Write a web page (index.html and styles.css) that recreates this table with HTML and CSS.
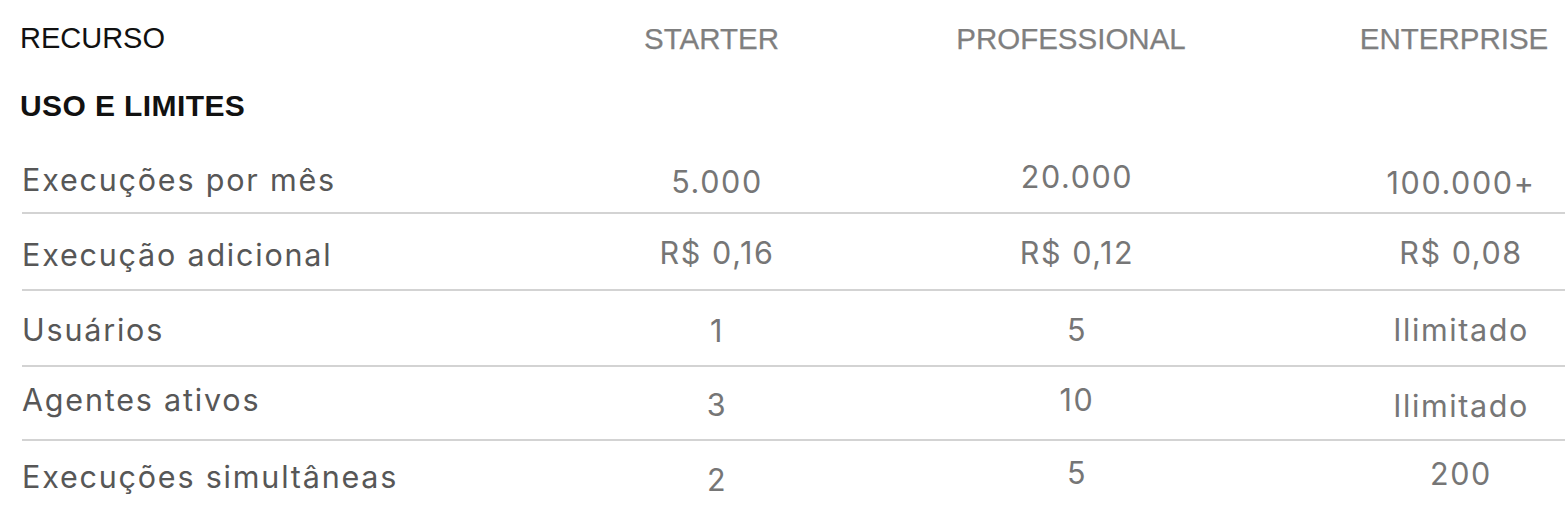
FILE: index.html
```html
<!DOCTYPE html>
<html lang="pt-BR">
<head>
<meta charset="utf-8">
<title>Comparação de recursos</title>
<link rel="stylesheet" href="styles.css">
</head>
<body>
<div class="table">
  <div class="head">
    <div class="h-label">RECURSO</div>
    <div class="h-tier h-starter">STARTER</div>
    <div class="h-tier h-pro">PROFESSIONAL</div>
    <div class="h-tier h-ent">ENTERPRISE</div>
  </div>
  <div class="section">USO E LIMITES</div>
  <div class="row r1">
    <div class="label">Execuções por mês</div>
    <div class="val d2">5.000</div>
    <div class="val u3">20.000</div>
    <div class="val ent d3">100.000+</div>
  </div>
  <div class="row r2">
    <div class="label">Execução adicional</div>
    <div class="val u2">R$ 0,16</div>
    <div class="val u2">R$ 0,12</div>
    <div class="val ent u2">R$ 0,08</div>
  </div>
  <div class="row r3">
    <div class="label">Usuários</div>
    <div class="val d1">1</div>
    <div class="val">5</div>
    <div class="val ent">Ilimitado</div>
  </div>
  <div class="row r4">
    <div class="label">Agentes ativos</div>
    <div class="val d5">3</div>
    <div class="val">10</div>
    <div class="val ent d6">Ilimitado</div>
  </div>
  <div class="row r5 last">
    <div class="label">Execuções simultâneas</div>
    <div class="val d3">2</div>
    <div class="val u4">5</div>
    <div class="val ent u3">200</div>
  </div>
</div>
</body>
</html>
```

FILE: styles.css
```css
html, body {
  margin: 0;
  padding: 0;
  background: #ffffff;
}

.table {
  padding: 24px 0 0 20px;
}

.head {
  display: grid;
  grid-template-columns: 515px 360px 360px 1fr;
  font-family: "Liberation Sans", Arial, sans-serif;
  font-size: 29.5px;
  line-height: 29px;
}

.h-label {
  color: #111111;
  font-size: 29px;
}

.h-tier {
  color: #7f7f7f;
  text-align: center;
  -webkit-text-stroke: 0.25px #7f7f7f;
}

.h-starter {
  margin-right: 7px;
}

.h-pro {
  margin-right: 8px;
}

.h-ent {
  padding-left: 100px;
  margin-right: 12px;
}

.section {
  margin-top: 38px;
  height: 46px;
  font-family: "Liberation Sans", Arial, sans-serif;
  font-weight: 700;
  font-size: 30px;
  line-height: 30px;
  letter-spacing: 0.4px;
  color: #111111;
}

.row {
  display: grid;
  grid-template-columns: 515px 360px 360px 1fr;
  align-items: start;
  margin-left: 2px;
  border-bottom: 2px solid #d3d3d3;
  font-family: Inter, "Noto Sans", sans-serif;
  font-size: 30.5px;
  line-height: 28px;
  box-sizing: border-box;
}

.r1 { height: 77px; padding-top: 29px; }
.r2 { height: 77px; padding-top: 27px; }
.r3 { height: 76px; padding-top: 25px; }
.r4 { height: 74px; padding-top: 19px; }
.r5 { height: 74px; padding-top: 22px; }

.row.last {
  border-bottom: none;
}

.label {
  color: #575757;
  letter-spacing: 1.8px;
}

.val {
  color: #767676;
  text-align: center;
  letter-spacing: 1.6px;
}

.val.ent {
  padding-left: 100px;
}

.d1 { margin-top: 1px; }
.d2 { margin-top: 2px; }
.d3 { margin-top: 3px; }
.d5 { margin-top: 5px; }
.d6 { margin-top: 6px; }
.u2 { margin-top: -2px; }
.u3 { margin-top: -3px; }
.u4 { margin-top: -4px; }
```
